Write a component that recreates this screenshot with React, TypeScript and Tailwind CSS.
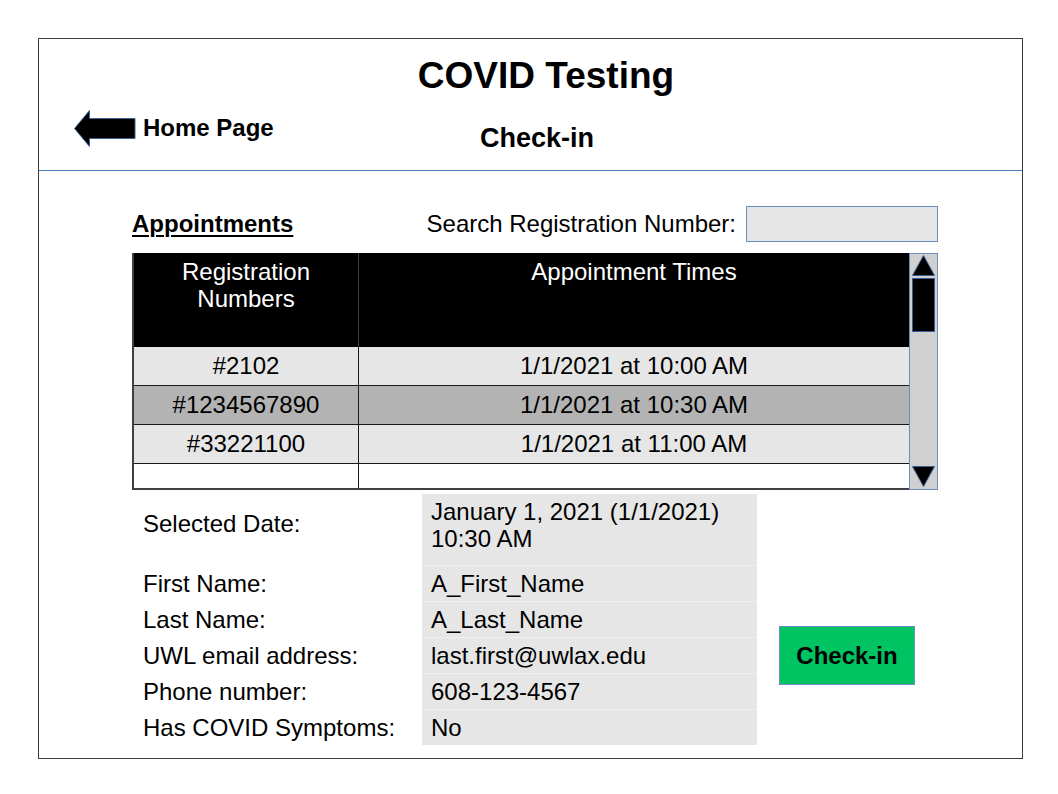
const rows = [
  { reg: '#2102', time: '1/1/2021 at 10:00 AM', bg: 'bg-[#e6e6e6]' },
  { reg: '#1234567890', time: '1/1/2021 at 10:30 AM', bg: 'bg-[#b3b3b3]' },
  { reg: '#33221100', time: '1/1/2021 at 11:00 AM', bg: 'bg-[#e6e6e6]' },
]

const details = [
  { label: 'First Name:', value: 'A_First_Name' },
  { label: 'Last Name:', value: 'A_Last_Name' },
  { label: 'UWL email address:', value: 'last.first@uwlax.edu' },
  { label: 'Phone number:', value: '608-123-4567' },
  { label: 'Has COVID Symptoms:', value: 'No' },
]

const BackArrow = () => (
  <svg width="62" height="37" viewBox="0 0 62 37">
    <polygon
      points="0.5,18.5 15.5,0.5 15.5,8.5 61,8.5 61,28.5 15.5,28.5 15.5,36.5"
      fill="#000"
      stroke="#3b5f95"
      strokeWidth="1"
    />
  </svg>
)

const Triangle = ({ down }: { down?: boolean }) => (
  <svg width="23" height="21" viewBox="0 0 23 21">
    <polygon
      points={down ? '0.5,0.5 22.5,0.5 11.5,20.5' : '11.5,0.5 22.5,20.5 0.5,20.5'}
      fill="#000"
      stroke="#3b5f95"
      strokeWidth="1"
    />
  </svg>
)

export default function App() {
  return (
    <div className="w-[1058px] h-[794px] bg-white pl-[38px] pt-[38px] font-['Liberation_Sans',Arial,sans-serif] text-black">
      <div className="w-[985px] h-[721px] border border-[#3c3c3c] flex flex-col">
        {/* header */}
        <div className="h-[132px] border-b border-[#4a7ebb] flex flex-col">
          <h1 className="mt-[17px] h-[40px] leading-[40px] text-[37px] font-bold text-center pl-[31px]">
            COVID Testing
          </h1>
          <div className="flex items-start pl-[35px]">
            <div className="w-[406px] flex items-start">
              <div className="mt-[14px]">
                <BackArrow />
              </div>
              <span className="ml-[7px] mt-[18px] text-[24px] leading-[28px] font-bold">Home Page</span>
            </div>
            <span className="mt-[27px] text-[27px] leading-[30px] font-bold">Check-in</span>
          </div>
        </div>

        {/* body */}
        <div className="pl-[93px] pt-[35px]">
          <div className="w-[806px] flex items-center justify-between h-[36px]">
            <span className="text-[24px] font-bold underline underline-offset-[3px] decoration-[2px]">
              Appointments
            </span>
            <div className="flex items-center">
              <span className="text-[24px]">Search Registration Number:</span>
              <div className="ml-[10px] w-[192px] h-[36px] bg-[#e6e6e6] border border-[#6c8ebf]" />
            </div>
          </div>

          {/* table */}
          <div className="mt-[11px] w-[806px] h-[237px] flex">
            <div className="w-[777px] flex flex-col border-l-2 border-b-2 border-[#404040]">
              <div className="h-[94px] bg-black text-white text-[24px] leading-[27px] flex">
                <div className="w-[225px] text-center pt-[5px] border-r border-[#3a3a3a]">
                  Registration
                  <br />
                  Numbers
                </div>
                <div className="flex-1 text-center pt-[5px]">Appointment Times</div>
              </div>
              {rows.map((r) => (
                <div key={r.reg} className={`h-[39px] flex border-b border-[#1a1a1a] text-[24px] ${r.bg}`}>
                  <div className="w-[225px] border-r border-[#1a1a1a] flex items-center justify-center">
                    {r.reg}
                  </div>
                  <div className="flex-1 flex items-center justify-center">{r.time}</div>
                </div>
              ))}
              <div className="flex-1 flex bg-white">
                <div className="w-[225px] border-r border-[#1a1a1a]" />
              </div>
            </div>
            <div className="w-[29px] bg-[#d0d0d0] border border-[#6c8ebf] flex flex-col items-center pt-[1px] pb-[2px]">
              <Triangle />
              <div className="mt-[2px] w-[23px] h-[54px] bg-black border border-[#3b5f95]" />
              <div className="flex-1" />
              <Triangle down />
            </div>
          </div>

          {/* details */}
          <div className="mt-[4px] flex items-start text-[24px] leading-[27px]">
            <div className="w-[290px] pl-[11px] flex flex-col">
              <div className="h-[71px] pt-[16px]">Selected Date:</div>
              {details.map((d) => (
                <div key={d.label} className="h-[36px] flex items-center">
                  {d.label}
                </div>
              ))}
            </div>
            <div className="w-[335px] bg-[#e6e6e6] flex flex-col">
              <div className="h-[71px] pt-[4px] pl-[9px]">
                January 1, 2021 (1/1/2021)
                <br />
                10:30 AM
              </div>
              {details.map((d) => (
                <div key={d.label} className="h-[36px] flex items-center pl-[9px] border-t border-[#efefef]">
                  {d.value}
                </div>
              ))}
            </div>
            <button className="ml-[22px] mt-[132px] w-[136px] h-[59px] bg-[#00c462] border border-[#6c8ebf] text-[24px] font-bold text-black">
              Check-in
            </button>
          </div>
        </div>
      </div>
    </div>
  )
}
